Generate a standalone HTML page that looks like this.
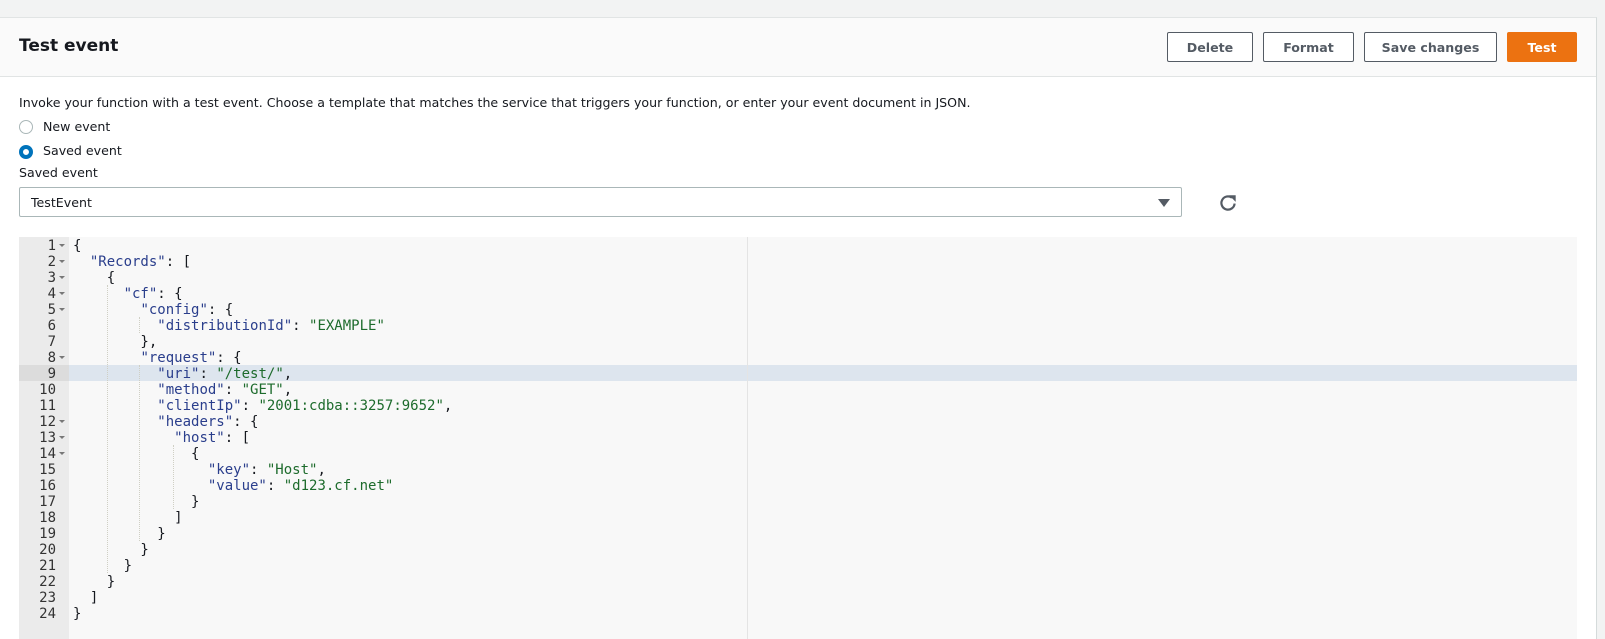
<!DOCTYPE html>
<html><head><meta charset="utf-8"><style>
body{margin:0;width:1605px;height:638px;overflow:hidden;background:#f2f3f3;font-family:"DejaVu Sans","Liberation Sans",sans-serif;color:#16191f;position:relative}
.panel{position:absolute;left:0;top:17px;width:1596px;height:621px;background:#fff;border-top:1px solid #e1e4e4;border-right:1px solid #d5dbdb}
.hdr{position:absolute;left:0;top:0;width:100%;height:58px;background:#fafafa;border-bottom:1px solid #e1e4e4}
.title{position:absolute;left:19px;top:18px;font-size:17px;font-weight:bold}
.btn{position:absolute;top:14px;height:30px;box-sizing:border-box;border:1px solid #545b64;border-radius:2px;background:#fff;color:#545b64;font-weight:bold;font-size:12.6px;display:flex;align-items:center;justify-content:center}
.t{position:absolute;font-size:12.6px;white-space:nowrap}
.radio{position:absolute;left:19px;width:14px;height:14px;box-sizing:border-box;border-radius:50%;border:1px solid #aab7b8;background:#fff}
.sel{position:absolute;left:19px;top:169px;width:1163px;height:30px;box-sizing:border-box;border:1px solid #aab7b8;border-radius:2px}
.ed{position:absolute;left:19px;top:219px;width:1558px;height:402px;background:#f8f8f8;font-family:"DejaVu Sans Mono","Liberation Mono",monospace;font-size:14px}
.gut{position:absolute;left:0;top:0;width:50px;height:100%;background:#ebebeb}
.ln{position:absolute;left:0;width:37px;height:16px;line-height:18px;text-align:right;color:#333;font-size:14px}
.ar{position:absolute;left:40px;width:0;height:0;border-left:3px solid transparent;border-right:3px solid transparent;border-top:3px solid #777}
.code{position:absolute;left:54px;height:16px;line-height:18px;white-space:pre;color:#16191f}
.k{color:#2a3e8c}.s{color:#1d6b2c}
.guide{position:absolute;border-left:1px dotted #cfcfc4;width:0}
</style></head><body>
<div class="panel">
<div class="hdr">
<div class="title">Test event</div>
<div class="btn" style="left:1167px;width:86px">Delete</div>
<div class="btn" style="left:1263px;width:91px">Format</div>
<div class="btn" style="left:1364px;width:133px">Save changes</div>
<div class="btn" style="left:1507px;width:70px;background:#ec7211;border-color:#ec7211;color:#fff">Test</div>
</div>
<div class="t" style="left:19px;top:77px">Invoke your function with a test event. Choose a template that matches the service that triggers your function, or enter your event document in JSON.</div>
<div class="radio" style="top:102px"></div>
<div class="t" style="left:43px;top:101px">New event</div>
<div class="radio" style="top:127px;border:4px solid #0073bb"></div>
<div class="t" style="left:43px;top:125px">Saved event</div>
<div class="t" style="left:19px;top:147px">Saved event</div>
<div class="sel"><div class="t" style="left:11px;top:7px">TestEvent</div>
<div style="position:absolute;left:1138px;top:11px;width:0;height:0;border-left:6px solid transparent;border-right:6px solid transparent;border-top:8px solid #545b64"></div></div>
<svg style="position:absolute;left:1217px;top:174px" width="22" height="22" viewBox="0 0 20 20"><path d="M16 10.5A6 6 0 1 1 13.6 5.2" fill="none" stroke="#545b64" stroke-width="2"/><path d="M11 3L17 3L17 9Z" fill="#545b64"/></svg>
<div class="ed">
<div class="gut"></div>
<div style="position:absolute;left:0;top:128px;width:50px;height:16px;background:#dcdcdc"></div>
<div style="position:absolute;left:50px;top:128px;right:0;height:16px;background:#dde5ee"></div>
<div style="position:absolute;left:728px;top:0;width:1px;height:100%;background:#e4e4e4"></div>
<div class="guide" style="left:88px;top:48px;height:288px"></div>
<div class="guide" style="left:120px;top:80px;height:16px"></div>
<div class="guide" style="left:120px;top:128px;height:176px"></div>
<div class="guide" style="left:154px;top:208px;height:64px"></div>
<div class="ln" style="top:0">1</div><div class="ar" style="top:7px"></div><div class="code" style="top:0">{</div>
<div class="ln" style="top:16px">2</div><div class="ar" style="top:23px"></div><div class="code" style="top:16px">  <span class="k">"Records"</span>: [</div>
<div class="ln" style="top:32px">3</div><div class="ar" style="top:39px"></div><div class="code" style="top:32px">    {</div>
<div class="ln" style="top:48px">4</div><div class="ar" style="top:55px"></div><div class="code" style="top:48px">      <span class="k">"cf"</span>: {</div>
<div class="ln" style="top:64px">5</div><div class="ar" style="top:71px"></div><div class="code" style="top:64px">        <span class="k">"config"</span>: {</div>
<div class="ln" style="top:80px">6</div><div class="code" style="top:80px">          <span class="k">"distributionId"</span>: <span class="s">"EXAMPLE"</span></div>
<div class="ln" style="top:96px">7</div><div class="code" style="top:96px">        },</div>
<div class="ln" style="top:112px">8</div><div class="ar" style="top:119px"></div><div class="code" style="top:112px">        <span class="k">"request"</span>: {</div>
<div class="ln" style="top:128px">9</div><div class="code" style="top:128px">          <span class="k">"uri"</span>: <span class="s">"/test/"</span>,</div>
<div class="ln" style="top:144px">10</div><div class="code" style="top:144px">          <span class="k">"method"</span>: <span class="s">"GET"</span>,</div>
<div class="ln" style="top:160px">11</div><div class="code" style="top:160px">          <span class="k">"clientIp"</span>: <span class="s">"2001:cdba::3257:9652"</span>,</div>
<div class="ln" style="top:176px">12</div><div class="ar" style="top:183px"></div><div class="code" style="top:176px">          <span class="k">"headers"</span>: {</div>
<div class="ln" style="top:192px">13</div><div class="ar" style="top:199px"></div><div class="code" style="top:192px">            <span class="k">"host"</span>: [</div>
<div class="ln" style="top:208px">14</div><div class="ar" style="top:215px"></div><div class="code" style="top:208px">              {</div>
<div class="ln" style="top:224px">15</div><div class="code" style="top:224px">                <span class="k">"key"</span>: <span class="s">"Host"</span>,</div>
<div class="ln" style="top:240px">16</div><div class="code" style="top:240px">                <span class="k">"value"</span>: <span class="s">"d123.cf.net"</span></div>
<div class="ln" style="top:256px">17</div><div class="code" style="top:256px">              }</div>
<div class="ln" style="top:272px">18</div><div class="code" style="top:272px">            ]</div>
<div class="ln" style="top:288px">19</div><div class="code" style="top:288px">          }</div>
<div class="ln" style="top:304px">20</div><div class="code" style="top:304px">        }</div>
<div class="ln" style="top:320px">21</div><div class="code" style="top:320px">      }</div>
<div class="ln" style="top:336px">22</div><div class="code" style="top:336px">    }</div>
<div class="ln" style="top:352px">23</div><div class="code" style="top:352px">  ]</div>
<div class="ln" style="top:368px">24</div><div class="code" style="top:368px">}</div>
</div>
</div>
</body></html>
